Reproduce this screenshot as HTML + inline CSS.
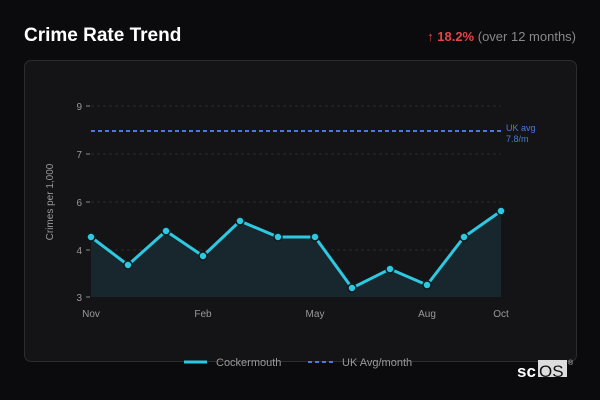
<!DOCTYPE html><html><head><style>
body{margin:0;width:600px;height:400px;background:#0b0b0e;font-family:"Liberation Sans",sans-serif;position:relative;overflow:hidden}
.t{position:absolute;left:24px;top:25px;color:#fff;font-weight:bold;font-size:19px}
.r{position:absolute;right:24px;top:29px;font-size:13px;color:#888}
.r b{color:#e04646}
.card{position:absolute;left:24px;top:60px;width:551px;height:300px;border:1px solid #2b2b30;border-radius:7px;background:#141417}
</style></head><body>
<div class="t">Crime Rate Trend</div>
<div class="r"><b>↑ 18.2%</b> (over 12 months)</div>
<div class="card"></div>
<svg width="600" height="400" style="position:absolute;left:0;top:0" font-family="Liberation Sans" font-size="10" fill="#999">
<g stroke="#2a2a2e" stroke-dasharray="3,3"><line x1="91" x2="501" y1="106" y2="106"/><line x1="91" x2="501" y1="154" y2="154"/><line x1="91" x2="501" y1="202" y2="202"/><line x1="91" x2="501" y1="250" y2="250"/></g>
<g stroke="#888"><line x1="86" x2="90" y1="106" y2="106"/><line x1="86" x2="90" y1="154" y2="154"/><line x1="86" x2="90" y1="202" y2="202"/><line x1="86" x2="90" y1="250" y2="250"/><line x1="86" x2="90" y1="297" y2="297"/></g>
<g text-anchor="end"><text x="82" y="110">9</text><text x="82" y="158">7</text><text x="82" y="206">6</text><text x="82" y="254">4</text><text x="82" y="301">3</text></g>
<text transform="translate(53,202) rotate(-90)" text-anchor="middle">Crimes per 1,000</text>
<line x1="91" x2="501" y1="131" y2="131" stroke="#4a7ae0" stroke-width="2" stroke-dasharray="4,3"/>
<text x="506" y="131" fill="#4a7ae0" font-size="9">UK avg</text><text x="506" y="142" fill="#4a7ae0" font-size="9">7.8/m</text>
<polygon fill="#17272d" points="91,297 91,237 128,265 166,231 203,256 240,221 278,237 315,237 352,288 390,269 427,285 464,237 501,211 501,297"/>
<polyline fill="none" stroke="#2ec8e0" stroke-width="3" stroke-linejoin="round" points="91,237 128,265 166,231 203,256 240,221 278,237 315,237 352,288 390,269 427,285 464,237 501,211"/>
<g fill="#2ec8e0" stroke="#0b1a1e" stroke-width="1.5"><circle cx="91" cy="237" r="4"/><circle cx="128" cy="265" r="4"/><circle cx="166" cy="231" r="4"/><circle cx="203" cy="256" r="4"/><circle cx="240" cy="221" r="4"/><circle cx="278" cy="237" r="4"/><circle cx="315" cy="237" r="4"/><circle cx="352" cy="288" r="4"/><circle cx="390" cy="269" r="4"/><circle cx="427" cy="285" r="4"/><circle cx="464" cy="237" r="4"/><circle cx="501" cy="211" r="4"/></g>
<g text-anchor="middle"><text x="91" y="317">Nov</text><text x="203" y="317">Feb</text><text x="315" y="317">May</text><text x="427" y="317">Aug</text><text x="501" y="317">Oct</text></g>
<line x1="184" x2="207" y1="362" y2="362" stroke="#2ec8e0" stroke-width="3"/>
<text x="216" y="366" font-size="11">Cockermouth</text>
<line x1="308" x2="333" y1="362" y2="362" stroke="#4a7ae0" stroke-width="2" stroke-dasharray="4,3"/>
<text x="342" y="366" font-size="11">UK Avg/month</text>
<rect x="538" y="360" width="29" height="17" fill="#ddd"/>
<text x="517" y="377" font-size="17" fill="#fff" font-weight="bold">sc</text>
<text x="539" y="377" font-size="17" fill="#111">OS</text>
<text x="568" y="365" font-size="7" fill="#ccc">®</text>
</svg>
</body></html>
